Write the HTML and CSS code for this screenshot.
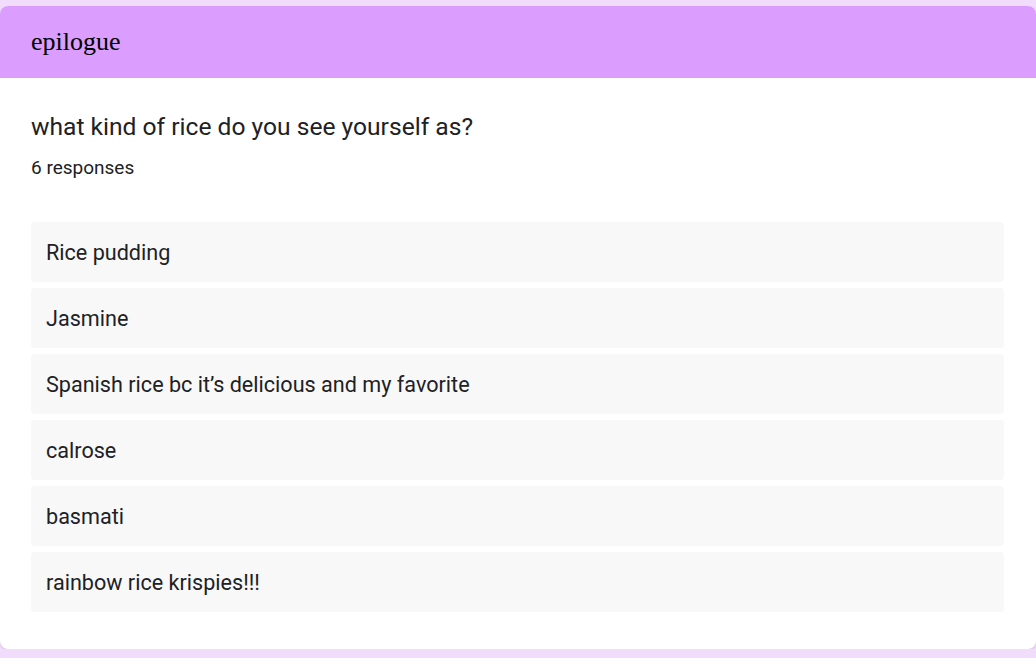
FILE: index.html
```html
<!DOCTYPE html>
<html>
<head>
<meta charset="utf-8">
<link rel="stylesheet" href="styles.css">
</head>
<body>
<div class="card">
  <div class="card-header"><span class="form-title">epilogue</span></div>
  <div class="card-body">
    <div class="question">what kind of rice do you see yourself as?</div>
    <div class="count">6 responses</div>
    <div class="responses">
      <div class="response">Rice pudding</div>
      <div class="response">Jasmine</div>
      <div class="response">Spanish rice bc it’s delicious and my favorite</div>
      <div class="response">calrose</div>
      <div class="response">basmati</div>
      <div class="response">rainbow rice krispies!!!</div>
    </div>
  </div>
</div>
</body>
</html>
```

FILE: styles.css
```css
html, body {
  margin: 0;
  padding: 0;
  background: #f2dcfc;
}
body {
  padding-top: 6px;
  font-family: Roboto, "Liberation Sans", sans-serif;
  color: #202124;
}
.card {
  width: 1036px;
  background: #ffffff;
  border-radius: 8px;
  overflow: hidden;
  box-shadow: 0 1px 2px rgba(0,0,0,0.15);
}
.card-header {
  height: 72px;
  background: #db9efe;
  display: flex;
  align-items: center;
  padding-left: 31px;
}
.form-title {
  font-family: "Liberation Serif", serif;
  font-size: 26px;
  color: #000;
}
.card-body {
  padding: 34px 32px 37px 31px;
}
.question {
  font-size: 24.6px;
  line-height: 30px;
}
.count {
  font-size: 19px;
  line-height: 24px;
  margin-top: 14px;
}
.responses {
  margin-top: 42px;
  display: flex;
  flex-direction: column;
  gap: 6px;
}
.response {
  height: 60px;
  background: #f8f8f8;
  border-radius: 4px;
  display: flex;
  align-items: center;
  padding-left: 15px;
  font-size: 21.6px;
}
```
